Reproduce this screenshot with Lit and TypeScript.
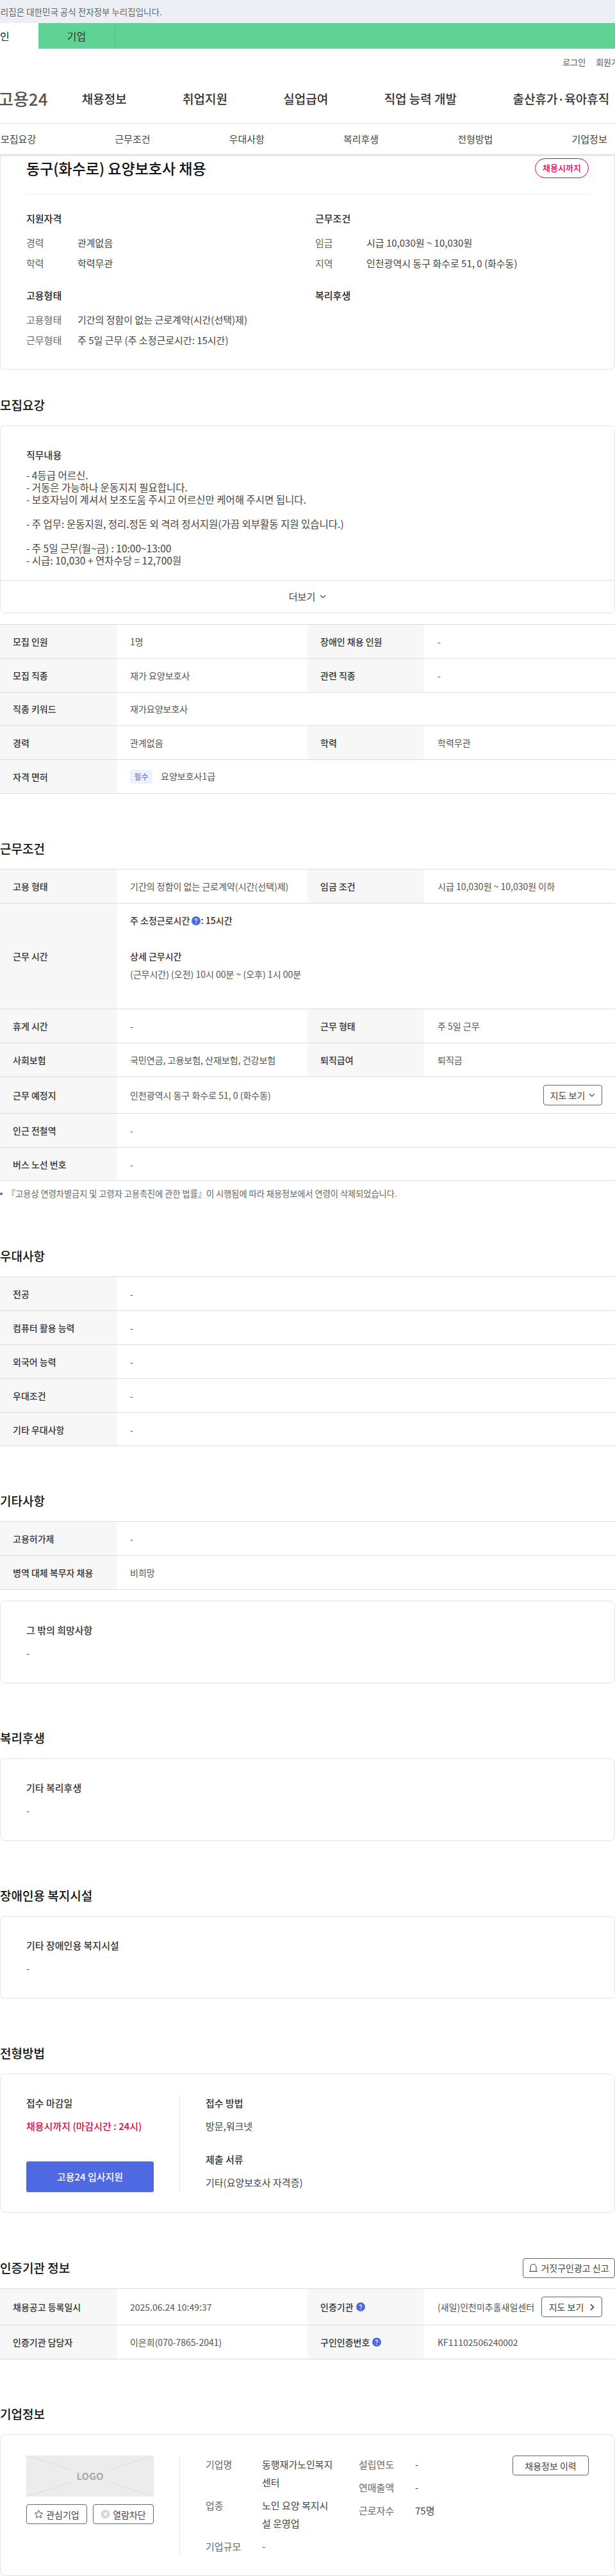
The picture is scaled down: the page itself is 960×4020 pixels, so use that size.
import { LitElement, html, css } from 'lit';
import { customElement } from 'lit/decorators.js';

const help = html`<svg class="help" width="14" height="14" viewBox="0 0 14 14">
  <circle cx="7" cy="7" r="7" fill="#4f69e2" />
  <path d="M5.4 5.5a1.6 1.6 0 1 1 2.5 1.3c-.6.4-.9.7-.9 1.3" fill="none" stroke="#fff" stroke-width="1.2" />
  <circle cx="7" cy="10.2" r=".8" fill="#fff" />
</svg>`;

const chevronDown = html`<svg width="10" height="6" viewBox="0 0 10 6">
  <path d="M1 1l4 4 4-4" fill="none" stroke="#444" stroke-width="1.2" />
</svg>`;

// 표 한 행: [라벨, 값, 라벨, 값]
type Row = { cells: unknown[]; cls?: string };

@customElement('app-root')
export class AppRoot extends LitElement {
  static styles = css`
    :host {
      display: block;
      width: 960px;
      overflow: hidden;
      background: #fff;
      color: #333;
      font-family: 'Noto Sans CJK KR', 'Noto Sans', sans-serif;
      font-size: 14px;
    }
    * {
      box-sizing: border-box;
    }
    .notice {
      height: 36px;
      background: #ecf0f5;
      color: #666;
      font-size: 13.5px;
      line-height: 36px;
      white-space: nowrap;
    }
    .notice span {
      display: block;
      margin-left: -27px;
    }
    .tabs {
      display: flex;
      height: 40px;
      background: #60d394;
      margin-left: -60px;
      font-size: 16px;
      line-height: 40px;
      color: #333;
      text-align: center;
    }
    .tabs div {
      width: 120px;
    }
    .tabs .on {
      background: #fff;
      color: #222;
    }
    .tabs .biz {
      border-right: 1px solid #55c286;
    }
    .util {
      display: flex;
      justify-content: flex-end;
      height: 40px;
      align-items: center;
      font-size: 13px;
      color: #555;
      white-space: nowrap;
    }
    .util div {
      display: flex;
      gap: 16px;
      margin-right: -18px;
    }
    .gnb {
      display: flex;
      align-items: center;
      height: 76.5px;
      border-bottom: 1px solid #eee;
      white-space: nowrap;
      color: #333;
      font-size: 19px;
      font-weight: 500;
      gap: 87.4px;
    }
    .logo {
      margin-left: -3px;
      margin-right: -34.2px;
      font-size: 26px;
      color: #555;
    }
    .snb {
      display: flex;
      height: 48.5px;
      align-items: center;
      font-size: 15px;
      color: #444;
      box-shadow: 0 1px 3px rgba(0, 0, 0, 0.25);
      position: relative;
      padding-left: 1px;
    }
    .snb div {
      width: 178.3px;
      flex: none;
    }
    .card {
      border: 1px solid #e3e3e3;
      border-radius: 8px;
      background: #fff;
    }
    .summary {
      border-top: 0;
      border-radius: 0 0 8px 8px;
      padding: 6px 40px 30px;
      height: 335.5px;
    }
    .summary-top {
      display: flex;
      justify-content: space-between;
      align-items: center;
      padding-bottom: 25px;
      border-bottom: 1px solid #eee;
    }
    .summary-top h1 {
      margin: 0;
      font-size: 23px;
      line-height: 31px;
      font-weight: 500;
      color: #111;
    }
    .badge {
      width: 84px;
      height: 31px;
      border: 1px solid #e6004c;
      border-radius: 16px;
      color: #e6004c;
      font-size: 13px;
      font-weight: 500;
      line-height: 28px;
      text-align: center;
    }
    .summary-grid {
      display: grid;
      grid-template-columns: 451px 1fr;
      row-gap: 23px;
      margin-top: 25px;
    }
    .summary-grid h3 {
      margin: 0 0 9px;
      font-size: 15px;
      line-height: 24px;
      font-weight: 500;
      color: #222;
    }
    .kv {
      display: flex;
      height: 32px;
      align-items: center;
      font-size: 15px;
      color: #444;
    }
    .kv span:first-child {
      width: 80px;
      color: #666;
    }
    section {
      margin-top: 70px;
    }
    section.first {
      margin-top: 40px;
    }
    section.org-sec {
      margin-top: 71.4px;
    }
    .head {
      display: flex;
      justify-content: space-between;
      align-items: center;
      height: 30px;
      margin-bottom: 17px;
    }
    h2 {
      margin: 0;
      font-size: 19px;
      line-height: 30px;
      font-weight: 500;
      color: #111;
    }
    .job {
      padding: 33px 40px 21px;
    }
    .job h3,
    .plain h3,
    .apply h3 {
      margin: 0;
      font-size: 15px;
      line-height: 24px;
      font-weight: 500;
      color: #333;
    }
    .job-text {
      margin-top: 10px;
      font-size: 15.5px;
      line-height: 19px;
      color: #444;
      white-space: pre-line;
    }
    .more {
      display: flex;
      align-items: center;
      justify-content: center;
      gap: 7px;
      height: 51.5px;
      border-top: 1px solid #e3e3e3;
      font-size: 15px;
      color: #444;
    }
    .table {
      margin-top: 17px;
      border-top: 1px solid #ddd;
    }
    .head + .table {
      margin-top: 0;
    }
    .row {
      display: grid;
      grid-template-columns: 182px 298px 182px 298px;
      height: 52.8px;
      border-bottom: 1px solid #ddd;
      font-size: 14px;
      color: #555;
    }
    .row.wide {
      grid-template-columns: 182px 1fr;
    }
    .row.tall {
      height: 165.5px;
    }
    .row.loc {
      height: 57px;
    }
    .row > div {
      display: flex;
      align-items: center;
      padding: 0 8px 0 21px;
      white-space: nowrap;
    }
    .row > .th {
      background: #f7f7f7;
      color: #333;
      font-weight: 500;
      padding-left: 20px;
      gap: 4px;
    }
    .row .grow {
      justify-content: space-between;
      padding-right: 20px;
    }
    .req {
      display: inline-block;
      width: 35px;
      height: 22px;
      margin-right: 13px;
      border-radius: 3px;
      background: #eef1fd;
      color: #4f69e2;
      font-size: 12px;
      line-height: 22px;
      text-align: center;
    }
    .hours {
      align-self: flex-start;
      margin-top: 12px;
    }
    .hours p {
      margin: 0;
      line-height: 28px;
    }
    .hours b {
      font-weight: 500;
      color: #333;
    }
    .hours .help {
      vertical-align: -2px;
    }
    .hours .sp {
      margin-top: 28px;
    }
    .btn {
      display: inline-flex;
      align-items: center;
      justify-content: center;
      gap: 6px;
      height: 32px;
      border: 1px solid #666;
      border-radius: 4px;
      background: #fff;
      color: #444;
      font-size: 14px;
    }
    .map {
      width: 92px;
    }
    .map.arrow {
      width: 95px;
      gap: 10px;
    }
    .note {
      height: 20px;
      margin-top: 10px;
      margin-bottom: 72px;
      font-size: 13.2px;
      line-height: 20px;
      color: #666;
      white-space: nowrap;
      display: flex;
      align-items: center;
      gap: 7px;
    }
    .note i {
      width: 4px;
      height: 4px;
      border-radius: 50%;
      background: #666;
    }
    .note + section {
      margin-top: 0;
    }
    .plain {
      height: 129px;
      padding: 33px 40px 0;
    }
    .plain p {
      margin: 12px 0 0;
      font-size: 15px;
      line-height: 24px;
      color: #555;
    }
    .table + .plain {
      margin-top: 17px;
    }
    .apply {
      display: flex;
      padding: 32px 40px 31px;
    }
    .apply-left {
      display: flex;
      flex-direction: column;
      width: 199px;
      min-height: 152px;
      flex: none;
    }
    .apply h3 {
      line-height: 26px;
    }
    .apply p {
      margin: 10px 0 0;
      font-size: 15px;
      line-height: 26px;
      color: #444;
    }
    .apply .deadline {
      color: #e6004c;
      font-weight: 500;
    }
    .apply-btn {
      margin-top: auto;
      height: 48px;
      border-radius: 3px;
      background: #4f69e2;
      color: #fff;
      font-size: 15px;
      font-weight: 500;
      line-height: 48px;
      text-align: center;
    }
    .vline {
      margin-left: 40px;
      padding-left: 40px;
      border-left: 1px solid #e3e3e3;
      flex: 1;
    }
    .apply .vline h3.docs {
      margin-top: 26px;
    }
    .report {
      width: 144px;
      height: 31px;
      gap: 4px;
    }
    .org {
      display: flex;
      padding: 32px 40px;
      height: 221px;
    }
    .org-left {
      width: 199px;
      flex: none;
    }
    .org-logo {
      position: relative;
      height: 64px;
      background: #ececec;
      color: #a8a8a8;
      font-size: 15px;
      font-weight: 700;
      line-height: 64px;
      text-align: center;
    }
    .org-logo svg {
      position: absolute;
      inset: 0;
    }
    .org-btns {
      display: flex;
      justify-content: space-between;
      margin-top: 12px;
    }
    .org-btns .btn {
      width: 95px;
      height: 31px;
      gap: 4px;
    }
    .org-info {
      display: flex;
      height: 155px;
      font-size: 15px;
      line-height: 28px;
      color: #444;
    }
    .org-col {
      display: grid;
      grid-template-columns: 88px 111px;
      align-content: start;
      row-gap: 8px;
      width: 239px;
    }
    .org-col.second {
      grid-template-columns: 88px 88px;
      width: 240px;
    }
    .org-col .k {
      color: #666;
    }
    .history {
      width: 119px;
      height: 31px;
      flex: none;
    }
  `;

  private renderRows(rows: Row[]) {
    return html`<div class="table">
      ${rows.map(
        (r) => html`<div class="row ${r.cells.length === 2 ? 'wide' : ''} ${r.cls ?? ''}">
          ${r.cells.map((c, i) => html`<div class="${i % 2 === 0 ? 'th' : 'grow'}">${c}</div>`)}
        </div>`
      )}
    </div>`;
  }

  private renderPlain(title: string) {
    return html`<div class="card plain">
      <h3>${title}</h3>
      <p>-</p>
    </div>`;
  }

  render() {
    const tabs = ['모집요강', '근무조건', '우대사항', '복리후생', '전형방법', '기업정보'];
    const gnb = ['채용정보', '취업지원', '실업급여', '직업 능력 개발', '출산휴가·육아휴직'];

    return html`
      <div class="notice"><span>이 누리집은 대한민국 공식 전자정부 누리집입니다.</span></div>
      <div class="tabs">
        <div class="on">개인</div>
        <div class="biz">기업</div>
      </div>
      <div class="util"><div><span>로그인</span><span>회원가입</span></div></div>
      <div class="gnb">
        <span class="logo">고용24</span>
        ${gnb.map((g) => html`<span>${g}</span>`)}
      </div>
      <div class="snb">${tabs.map((t) => html`<div>${t}</div>`)}</div>

      <!-- 상단 요약 -->
      <div class="card summary">
        <div class="summary-top">
          <h1>동구(화수로) 요양보호사 채용</h1>
          <div class="badge">채용시까지</div>
        </div>
        <div class="summary-grid">
          <div>
            <h3>지원자격</h3>
            <div class="kv"><span>경력</span><span>관계없음</span></div>
            <div class="kv"><span>학력</span><span>학력무관</span></div>
          </div>
          <div>
            <h3>근무조건</h3>
            <div class="kv"><span>임금</span><span>시급 10,030원 ~ 10,030원</span></div>
            <div class="kv"><span>지역</span><span>인천광역시 동구 화수로 51, 0 (화수동)</span></div>
          </div>
          <div>
            <h3>고용형태</h3>
            <div class="kv"><span>고용형태</span><span>기간의 정함이 없는 근로계약(시간(선택)제)</span></div>
            <div class="kv"><span>근무형태</span><span>주 5일 근무 (주 소정근로시간: 15시간)</span></div>
          </div>
          <div><h3>복리후생</h3></div>
        </div>
      </div>

      <section class="first">
        <div class="head"><h2>모집요강</h2></div>
        <div class="card">
          <div class="job">
            <h3>직무내용</h3>
            <div class="job-text">- 4등급 어르신.
- 거동은 가능하나 운동지지 필요합니다.
- 보호자님이 계셔서 보조도움 주시고 어르신만 케어해 주시면 됩니다.

- 주 업무: 운동지원, 정리.정돈 외 격려 정서지원(가끔 외부활동 지원 있습니다.)

- 주 5일 근무(월~금) : 10:00~13:00
- 시급: 10,030 + 연차수당 = 12,700원</div>
          </div>
          <div class="more">더보기 ${chevronDown}</div>
        </div>
        ${this.renderRows([
          { cells: ['모집 인원', '1명', '장애인 채용 인원', '-'] },
          { cells: ['모집 직종', '재가 요양보호사', '관련 직종', '-'] },
          { cells: ['직종 키워드', '재가요양보호사'] },
          { cells: ['경력', '관계없음', '학력', '학력무관'] },
          { cells: ['자격 면허', html`<span><span class="req">필수</span>요양보호사1급</span>`] },
        ])}
      </section>

      <section>
        <div class="head"><h2>근무조건</h2></div>
        ${this.renderRows([
          { cells: ['고용 형태', '기간의 정함이 없는 근로계약(시간(선택)제)', '임금 조건', '시급 10,030원 ~ 10,030원 이하'] },
          {
            cls: 'tall',
            cells: [
              '근무 시간',
              html`<div class="hours">
                <p><b>주 소정근로시간 ${help}: 15시간</b></p>
                <p class="sp"><b>상세 근무시간</b></p>
                <p>(근무시간) (오전) 10시 00분 ~ (오후) 1시 00분</p>
              </div>`,
            ],
          },
          { cells: ['휴게 시간', '-', '근무 형태', '주 5일 근무'] },
          { cells: ['사회보험', '국민연금, 고용보험, 산재보험, 건강보험', '퇴직급여', '퇴직금'] },
          {
            cls: 'loc',
            cells: ['근무 예정지', html`<span>인천광역시 동구 화수로 51, 0 (화수동)</span><span class="btn map">지도 보기 ${chevronDown}</span>`],
          },
          { cells: ['인근 전철역', '-'] },
          { cells: ['버스 노선 번호', '-'] },
        ])}
      </section>
      <div class="note"><i></i>『고용상 연령차별금지 및 고령자 고용촉진에 관한 법률』이 시행됨에 따라 채용정보에서 연령이 삭제되었습니다.</div>

      <section>
        <div class="head"><h2>우대사항</h2></div>
        ${this.renderRows(
          ['전공', '컴퓨터 활용 능력', '외국어 능력', '우대조건', '기타 우대사항'].map((t) => ({ cells: [t, '-'] }))
        )}
      </section>

      <section>
        <div class="head"><h2>기타사항</h2></div>
        ${this.renderRows([
          { cells: ['고용허가제', '-'] },
          { cells: ['병역 대체 복무자 채용', '비희망'] },
        ])}
        ${this.renderPlain('그 밖의 희망사항')}
      </section>

      <section>
        <div class="head"><h2>복리후생</h2></div>
        ${this.renderPlain('기타 복리후생')}
      </section>

      <section>
        <div class="head"><h2>장애인용 복지시설</h2></div>
        ${this.renderPlain('기타 장애인용 복지시설')}
      </section>

      <section>
        <div class="head"><h2>전형방법</h2></div>
        <div class="card apply">
          <div class="apply-left">
            <h3>접수 마감일</h3>
            <p class="deadline">채용시까지 (마감시간 : 24시)</p>
            <div class="apply-btn">고용24 입사지원</div>
          </div>
          <div class="vline">
            <h3>접수 방법</h3>
            <p>방문,워크넷</p>
            <h3 class="docs">제출 서류</h3>
            <p>기타(요양보호사 자격증)</p>
          </div>
        </div>
      </section>

      <section class="org-sec">
        <div class="head">
          <h2>인증기관 정보</h2>
          <span class="btn report">
            <svg width="15" height="16" viewBox="0 0 15 16">
              <path d="M3 13V7a4.5 4.5 0 0 1 9 0v6" fill="none" stroke="#444" stroke-width="1.1" />
              <path d="M1 13.5h13" stroke="#444" stroke-width="1.1" />
            </svg>
            거짓구인광고 신고
          </span>
        </div>
        ${this.renderRows([
          {
            cls: 'loc',
            cells: [
              '채용공고 등록일시',
              '2025.06.24 10:49:37',
              html`인증기관 ${help}`,
              html`<span>(새일)인천미추홀새일센터</span><span class="btn map arrow">지도 보기 <svg width="7" height="11" viewBox="0 0 7 11"><path d="M1 1l4.5 4.5L1 10" fill="none" stroke="#333" stroke-width="1.5" /></svg></span>`,
            ],
          },
          { cells: ['인증기관 담당자', '이은희(070-7865-2041)', html`구인인증번호 ${help}`, 'KF11102506240002'] },
        ])}
      </section>

      <section>
        <div class="head"><h2>기업정보</h2></div>
        <div class="card org">
          <div class="org-left">
            <div class="org-logo">
              <svg width="199" height="64" viewBox="0 0 199 64">
                <path d="M0 0l72 23M199 0l-72 23M0 64l72-23M199 64l-72-23" stroke="#dcdcdc" fill="none" />
              </svg>
              LOGO
            </div>
            <div class="org-btns">
              <span class="btn">
                <svg width="15" height="15" viewBox="0 0 15 15">
                  <path d="M7.5 1.5l1.9 3.9 4.2.6-3 3 .7 4.2-3.8-2-3.8 2 .7-4.2-3-3 4.2-.6z" fill="none" stroke="#444" />
                </svg>
                관심기업
              </span>
              <span class="btn">
                <svg width="15" height="15" viewBox="0 0 15 15">
                  <circle cx="7.5" cy="7.5" r="7" fill="#d8d8d8" />
                  <path d="M5 5l5 5M10 5l-5 5" stroke="#fff" stroke-width="1.2" />
                </svg>
                열람차단
              </span>
            </div>
          </div>
          <div class="vline org-info">
            <div class="org-col">
              <span class="k">기업명</span><span>동행재가노인복지센터</span>
              <span class="k">업종</span><span>노인 요양 복지시설 운영업</span>
              <span class="k">기업규모</span><span>-</span>
            </div>
            <div class="org-col second">
              <span class="k">설립연도</span><span>-</span>
              <span class="k">연매출액</span><span>-</span>
              <span class="k">근로자수</span><span>75명</span>
            </div>
            <span class="btn history">채용정보 이력</span>
          </div>
        </div>
      </section>
    `;
  }
}
